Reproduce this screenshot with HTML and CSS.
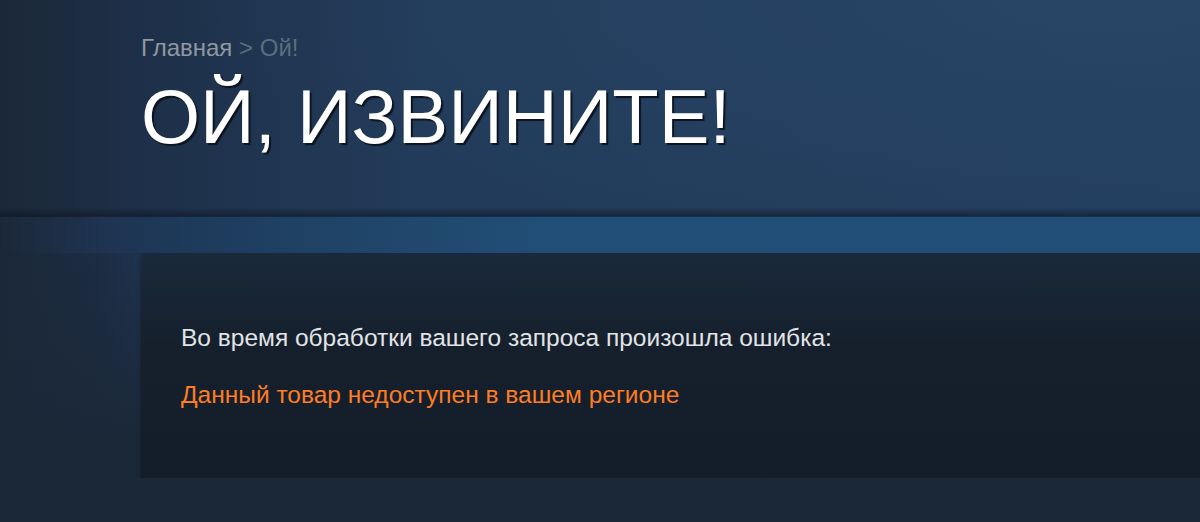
FILE: index.html
```html
<!DOCTYPE html>
<html lang="ru">
<head>
  <meta charset="UTF-8">
  <meta name="viewport" content="width=device-width, initial-scale=1.0">
  <title>Ой, извините!</title>
  <link rel="stylesheet" href="styles.css">
</head>
<body>
  <div class="page-header">
    <div class="breadcrumbs">
      <a href="#">Главная</a> &gt; <span>Ой!</span>
    </div>
    <h1 class="page-title">Ой, извините!</h1>
  </div>
  <div class="band"></div>
  <div class="content-wrap">
    <div class="error-box">
      <p class="error-intro">Во время обработки вашего запроса произошла ошибка:</p>
      <p class="error-msg">Данный товар недоступен в вашем регионе</p>
    </div>
  </div>
</body>
</html>
```

FILE: styles.css
```css
body {
  margin: 0;
  background-color: #1b2838;
  font-family: "Liberation Sans", Arial, sans-serif;
}
.page-header {
  height: 216px;
  box-sizing: border-box;
  padding: 36px 0 0 141px;
  background:
    linear-gradient(to bottom, rgba(0, 0, 0, 0) 0%, rgba(0, 0, 0, 0) 96%, rgba(14, 22, 34, 0.6) 100%),
    radial-gradient(ellipse 900px 260px at 1100px 0, rgba(44, 74, 108, 0.6), rgba(44, 74, 108, 0) 100%),
    linear-gradient(to right, #1b2838 0%, #1e3049 12%, #223b5a 35%, #233e5e 100%);
}
.breadcrumbs {
  font-size: 24px;
  line-height: 24px;
  color: #56707f;
}
.breadcrumbs a {
  color: #8f98a0;
  text-decoration: none;
}
.page-title {
  margin: 19px 0 0;
  font-size: 76px;
  line-height: 76px;
  font-weight: normal;
  text-transform: uppercase;
  color: #ffffff;
  text-shadow: 2px 2px 1px #0d1420;
}
.band {
  height: 37px;
  background: linear-gradient(to right, #1b2838 0%, #1e3452 9%, #1f4264 25%, #214e76 45%, #214e76 100%);
  box-shadow: inset 0 1px 0 rgba(10, 18, 30, 0.5);
}
.content-wrap {
  padding-left: 141px;
  background:
    linear-gradient(to bottom, rgba(27, 40, 56, 0) 0%, #1b2838 80%),
    linear-gradient(to right, #1b2838 0%, #1c2c42 8%, #1e3250 11.75%, #1b2838 11.75%);
}
.error-box {
  height: 225px;
  box-sizing: border-box;
  padding: 73px 0 0 40px;
  background: linear-gradient(to bottom, #1a293b 0%, #16202d 40%, #141e2a 100%);
  box-shadow: 0 3px 4px rgba(10, 15, 22, 0.4);
}
.error-box p {
  margin: 0;
  font-size: 24.5px;
  line-height: 24.5px;
}
.error-intro {
  color: #e1e4e6;
}
.error-msg {
  margin-top: 32px !important;
  color: #fe7c24;
}
```
